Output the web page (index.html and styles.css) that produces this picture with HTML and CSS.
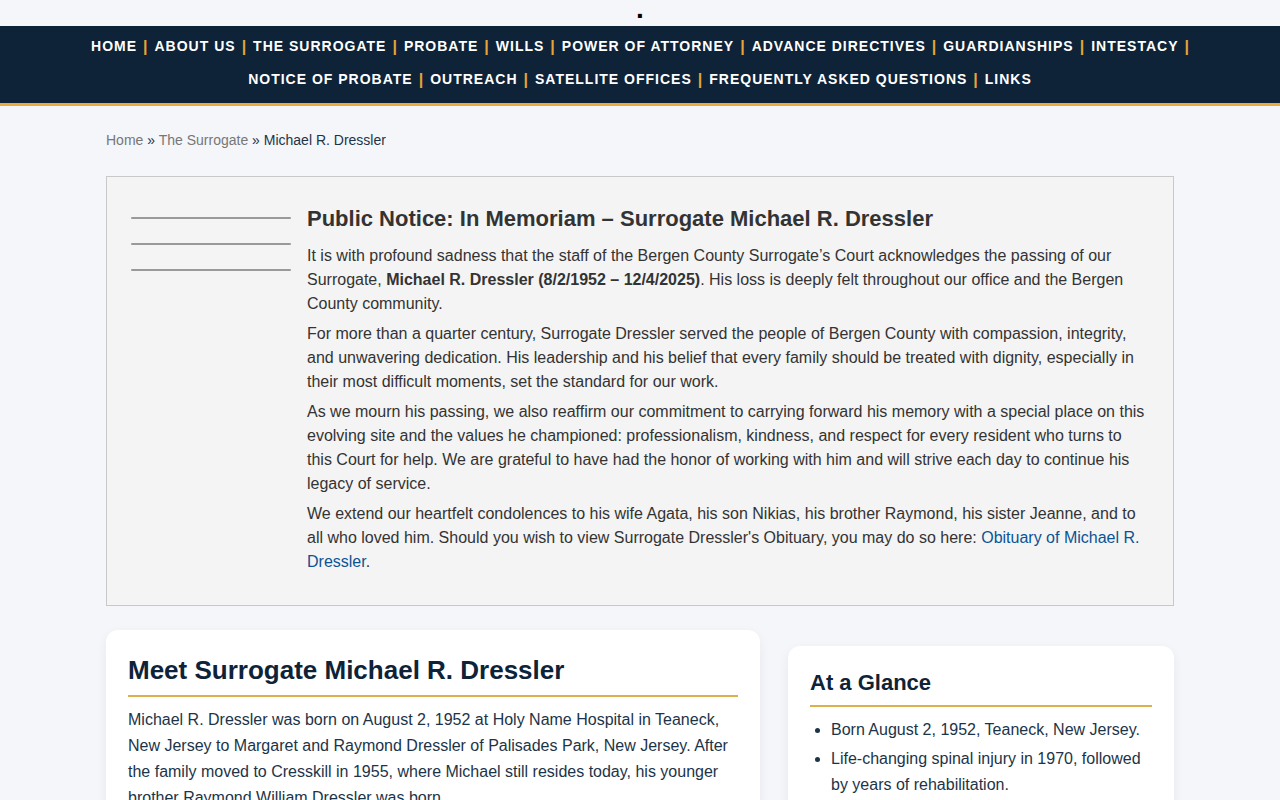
FILE: index.html
```html
<!DOCTYPE html>
<html lang="en">
<head>
<meta charset="utf-8">
<meta name="viewport" content="width=device-width, initial-scale=1">
<title>Michael R. Dressler</title>
<link rel="stylesheet" href="styles.css">
</head>
<body>
<header class="banner">.</header>
<nav class="main-nav" aria-label="Main">
  <ul class="nav-list">
    <li><a href="#">Home</a></li>
    <li><a href="#">About Us</a></li>
    <li><a href="#">The Surrogate</a></li>
    <li><a href="#">Probate</a></li>
    <li><a href="#">Wills</a></li>
    <li><a href="#">Power of Attorney</a></li>
    <li><a href="#">Advance Directives</a></li>
    <li><a href="#">Guardianships</a></li>
    <li><a href="#">Intestacy</a></li>
    <li><a href="#">Notice of Probate</a></li>
    <li><a href="#">Outreach</a></li>
    <li><a href="#">Satellite Offices</a></li>
    <li><a href="#">Frequently Asked Questions</a></li>
    <li><a href="#">Links</a></li>
  </ul>
</nav>
<main class="page">
  <nav class="breadcrumb" aria-label="Breadcrumb"><a href="#">Home</a> » <a href="#">The Surrogate</a> » <span>Michael R. Dressler</span></nav>
  <section class="notice">
    <div class="notice-rules" aria-hidden="true"><span></span><span></span><span></span></div>
    <div class="notice-body">
      <h2>Public Notice: In Memoriam – Surrogate Michael R. Dressler</h2>
      <p>It is with profound sadness that the staff of the Bergen County Surrogate’s Court acknowledges the passing of our Surrogate, <strong>Michael R. Dressler (8/2/1952 – 12/4/2025)</strong>. His loss is deeply felt throughout our office and the Bergen County community.</p>
      <p>For more than a quarter century, Surrogate Dressler served the people of Bergen County with compassion, integrity, and unwavering dedication. His leadership and his belief that every family should be treated with dignity, especially in their most difficult moments, set the standard for our work.</p>
      <p>As we mourn his passing, we also reaffirm our commitment to carrying forward his memory with a special place on this evolving site and the values he championed: professionalism, kindness, and respect for every resident who turns to this Court for help. We are grateful to have had the honor of working with him and will strive each day to continue his legacy of service.</p>
      <p>We extend our heartfelt condolences to his wife Agata, his son Nikias, his brother Raymond, his sister Jeanne, and to all who loved him. Should you wish to view Surrogate Dressler's Obituary, you may do so here: <a href="#">Obituary of Michael R. Dressler</a>.</p>
    </div>
  </section>
  <div class="columns">
    <article class="card">
      <h1>Meet Surrogate Michael R. Dressler</h1>
      <p>Michael R. Dressler was born on August 2, 1952 at Holy Name Hospital in Teaneck, New Jersey to Margaret and Raymond Dressler of Palisades Park, New Jersey. After the family moved to Cresskill in 1955, where Michael still resides today, his younger brother Raymond William Dressler was born.</p>
    </article>
    <aside class="card card-side">
      <h2>At a Glance</h2>
      <ul>
        <li>Born August 2, 1952, Teaneck, New Jersey.</li>
        <li>Life-changing spinal injury in 1970, followed by years of rehabilitation.</li>
      </ul>
    </aside>
  </div>
</main>
</body>
</html>
```
FILE: styles.css
```css
* { box-sizing: border-box; }
body {
  margin: 0;
  background: #f4f6fa;
  color: #1c3448;
  font: 16px/26px "Liberation Sans", Arial, sans-serif;
}
h1, h2, p, ul { margin: 0; padding: 0; }
a { text-decoration: none; }

.banner {
  padding-bottom: 8px;
  color: #000;
  font-size: 28px;
  font-weight: bold;
  line-height: 18px;
  text-align: center;
}

.main-nav {
  padding: 4px 40px 7px;
  background: #0e2338;
  border-bottom: 3px solid #eeaa3c;
}
.nav-list {
  display: flex;
  flex-wrap: wrap;
  justify-content: center;
  column-gap: 7px;
  max-width: 1120px;
  margin: 0 auto;
  list-style: none;
  font-size: 14px;
  font-weight: bold;
  line-height: 33px;
}
.nav-list li {
  display: flex;
  gap: 6px;
  white-space: nowrap;
}
.nav-list a {
  color: #fff;
  letter-spacing: 1px;
  text-transform: uppercase;
}
.nav-list li:not(:last-child)::after {
  content: "|";
  color: #e5a435;
  font-size: 16px;
}

.page {
  max-width: 1100px;
  margin: 0 auto;
  padding: 22px 16px;
}
.breadcrumb {
  margin-bottom: 24px;
  font-size: 14px;
  line-height: 24px;
}
.breadcrumb a { color: #777; }

.notice {
  display: flex;
  gap: 16px;
  margin-bottom: 24px;
  padding: 24px 24px 25px;
  background: #f4f4f4;
  border: 1px solid #c8c8c8;
  color: #333;
  line-height: 24px;
}
.notice-rules {
  display: flex;
  flex: 0 0 160px;
  flex-direction: column;
  gap: 24px;
  padding-top: 16px;
}
.notice-rules span {
  height: 2px;
  background: #999;
  border-radius: 1px;
}
.notice-body { flex: 1; }
.notice h2 {
  margin-bottom: 7px;
  font-size: 22px;
  line-height: 36px;
}
.notice p { margin-bottom: 6px; }
.notice a { color: #0b5394; }

.columns {
  display: grid;
  grid-template-columns: 654fr 386fr;
  gap: 28px;
  align-items: start;
}
.card {
  padding: 22px;
  background: #fff;
  border-radius: 12px;
  box-shadow: 0 4px 12px rgba(14, 35, 56, 0.06);
}
.card-side { margin-top: 16px; }
.card h1, .card h2 {
  margin-bottom: 10px;
  padding-bottom: 7px;
  border-bottom: 2px solid #dcb04a;
  color: #0e2338;
}
.card h1 { font-size: 26px; line-height: 36px; }
.card h2 { font-size: 22px; line-height: 30px; }
.card ul { padding-left: 21px; }
.card li { margin-bottom: 3px; }
```
